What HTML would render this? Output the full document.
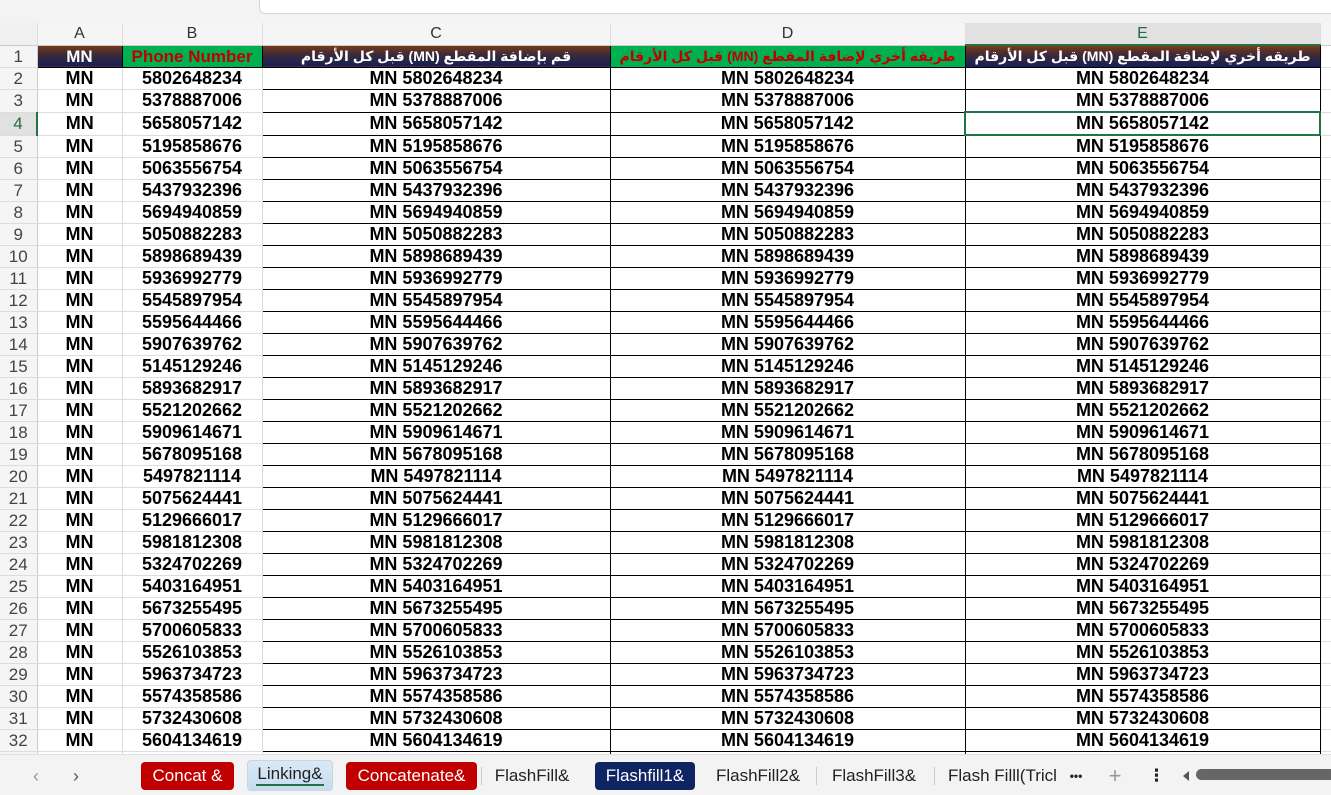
<!DOCTYPE html>
<html><head><meta charset="utf-8"><style>
*{margin:0;padding:0;box-sizing:border-box}
body{width:1331px;height:795px;overflow:hidden;background:#fff;font-family:"Liberation Sans","DejaVu Sans",sans-serif;position:relative}
.top{position:absolute;left:0;top:0;width:1331px;height:24px;background:#f3f3f3}
.fbox{position:absolute;left:259px;top:-2px;width:1080px;height:16px;background:#fff;border:1px solid #d4d4d4;border-radius:0 0 0 6px}
.grid{position:absolute;left:0;top:23px;width:1331px;height:732px;overflow:hidden}
table{border-collapse:collapse;table-layout:fixed}
td{height:22px;padding:0;text-align:center;font-weight:bold;font-size:18px;color:#000;white-space:nowrap;overflow:hidden;line-height:21px}
tr.ch td{height:22px;background:#f5f5f5;font-weight:normal;font-size:16px;color:#333;border-right:1px solid #ddd;border-bottom:1px solid #ccc}
td.rn{background:#f5f5f5;font-weight:normal;font-size:17px;color:#444;border-bottom:1px solid #ddd;border-right:1px solid #ccc;text-align:center}
td.a,td.b{border-right:1px solid #ddd;border-bottom:1px solid #ddd}
td.c,td.d,td.e{border:1px solid #000}
td.x{border-bottom:1px solid #ddd}
tr.h td.g{background:linear-gradient(#7a3a17,#3a2a3a 45%,#14205a);color:#fff;font-size:14px;border:1px solid #000}
tr.h td.a.g{font-size:17px}
tr.h td.gr{background:#00b050;color:#c00000;font-size:14px;border:1px solid #000}
tr.h td.b.gr{font-size:17px}
.tabs{position:absolute;left:0;top:754px;width:1331px;height:41px;background:#f3f3f3;border-top:1px solid #e0e0e0;font-size:17px}
.t{position:absolute;top:7px;height:28px;line-height:28px;text-align:center;color:#222}
.red{background:#c00000;color:#fff;border-radius:4px}
.navy{background:#0e2463;color:#fff;border-radius:4px}
.sep{position:absolute;top:12px;width:1px;height:18px;background:#ccc}
</style></head><body>
<div class="top"><div class="fbox"></div></div>
<div class="grid">
<table>
<colgroup><col style="width:37px"><col style="width:85px"><col style="width:140px"><col style="width:348px"><col style="width:355px"><col style="width:355px"><col style="width:11px"></colgroup>
<tr class="ch"><td style="background:#f0f0f0"></td><td>A</td><td>B</td><td>C</td><td>D</td><td style="background:#e1e1e1;color:#1e6e3e;border-bottom:2px solid #217346">E</td><td style="border-right:none"></td></tr>
<tr class="h"><td class="rn">1</td><td class="a g">MN</td><td class="b gr">Phone Number</td><td class="c g" dir="rtl">قم بإضافة المقطع (MN) قبل كل الأرقام</td><td class="d gr" dir="rtl">طريقه أخري لإضافة المقطع (MN) قبل كل الأرقام</td><td class="e g" dir="rtl">طريقه أخري لإضافة المقطع (MN) قبل كل الأرقام</td><td class="x"></td></tr>
<tr><td class="rn">2</td><td class="a">MN</td><td class="b">5802648234</td><td class="c">MN 5802648234</td><td class="d">MN 5802648234</td><td class="e">MN 5802648234</td><td class="x"></td></tr>
<tr><td class="rn">3</td><td class="a">MN</td><td class="b">5378887006</td><td class="c">MN 5378887006</td><td class="d">MN 5378887006</td><td class="e">MN 5378887006</td><td class="x"></td></tr>
<tr><td class="rn" style="background:#e1e1e1;color:#1e6e3e;border-right:2px solid #217346">4</td><td class="a">MN</td><td class="b">5658057142</td><td class="c">MN 5658057142</td><td class="d">MN 5658057142</td><td class="e" style="border:2px solid #217346">MN 5658057142</td><td class="x"></td></tr>
<tr><td class="rn">5</td><td class="a">MN</td><td class="b">5195858676</td><td class="c">MN 5195858676</td><td class="d">MN 5195858676</td><td class="e">MN 5195858676</td><td class="x"></td></tr>
<tr><td class="rn">6</td><td class="a">MN</td><td class="b">5063556754</td><td class="c">MN 5063556754</td><td class="d">MN 5063556754</td><td class="e">MN 5063556754</td><td class="x"></td></tr>
<tr><td class="rn">7</td><td class="a">MN</td><td class="b">5437932396</td><td class="c">MN 5437932396</td><td class="d">MN 5437932396</td><td class="e">MN 5437932396</td><td class="x"></td></tr>
<tr><td class="rn">8</td><td class="a">MN</td><td class="b">5694940859</td><td class="c">MN 5694940859</td><td class="d">MN 5694940859</td><td class="e">MN 5694940859</td><td class="x"></td></tr>
<tr><td class="rn">9</td><td class="a">MN</td><td class="b">5050882283</td><td class="c">MN 5050882283</td><td class="d">MN 5050882283</td><td class="e">MN 5050882283</td><td class="x"></td></tr>
<tr><td class="rn">10</td><td class="a">MN</td><td class="b">5898689439</td><td class="c">MN 5898689439</td><td class="d">MN 5898689439</td><td class="e">MN 5898689439</td><td class="x"></td></tr>
<tr><td class="rn">11</td><td class="a">MN</td><td class="b">5936992779</td><td class="c">MN 5936992779</td><td class="d">MN 5936992779</td><td class="e">MN 5936992779</td><td class="x"></td></tr>
<tr><td class="rn">12</td><td class="a">MN</td><td class="b">5545897954</td><td class="c">MN 5545897954</td><td class="d">MN 5545897954</td><td class="e">MN 5545897954</td><td class="x"></td></tr>
<tr><td class="rn">13</td><td class="a">MN</td><td class="b">5595644466</td><td class="c">MN 5595644466</td><td class="d">MN 5595644466</td><td class="e">MN 5595644466</td><td class="x"></td></tr>
<tr><td class="rn">14</td><td class="a">MN</td><td class="b">5907639762</td><td class="c">MN 5907639762</td><td class="d">MN 5907639762</td><td class="e">MN 5907639762</td><td class="x"></td></tr>
<tr><td class="rn">15</td><td class="a">MN</td><td class="b">5145129246</td><td class="c">MN 5145129246</td><td class="d">MN 5145129246</td><td class="e">MN 5145129246</td><td class="x"></td></tr>
<tr><td class="rn">16</td><td class="a">MN</td><td class="b">5893682917</td><td class="c">MN 5893682917</td><td class="d">MN 5893682917</td><td class="e">MN 5893682917</td><td class="x"></td></tr>
<tr><td class="rn">17</td><td class="a">MN</td><td class="b">5521202662</td><td class="c">MN 5521202662</td><td class="d">MN 5521202662</td><td class="e">MN 5521202662</td><td class="x"></td></tr>
<tr><td class="rn">18</td><td class="a">MN</td><td class="b">5909614671</td><td class="c">MN 5909614671</td><td class="d">MN 5909614671</td><td class="e">MN 5909614671</td><td class="x"></td></tr>
<tr><td class="rn">19</td><td class="a">MN</td><td class="b">5678095168</td><td class="c">MN 5678095168</td><td class="d">MN 5678095168</td><td class="e">MN 5678095168</td><td class="x"></td></tr>
<tr><td class="rn">20</td><td class="a">MN</td><td class="b">5497821114</td><td class="c">MN 5497821114</td><td class="d">MN 5497821114</td><td class="e">MN 5497821114</td><td class="x"></td></tr>
<tr><td class="rn">21</td><td class="a">MN</td><td class="b">5075624441</td><td class="c">MN 5075624441</td><td class="d">MN 5075624441</td><td class="e">MN 5075624441</td><td class="x"></td></tr>
<tr><td class="rn">22</td><td class="a">MN</td><td class="b">5129666017</td><td class="c">MN 5129666017</td><td class="d">MN 5129666017</td><td class="e">MN 5129666017</td><td class="x"></td></tr>
<tr><td class="rn">23</td><td class="a">MN</td><td class="b">5981812308</td><td class="c">MN 5981812308</td><td class="d">MN 5981812308</td><td class="e">MN 5981812308</td><td class="x"></td></tr>
<tr><td class="rn">24</td><td class="a">MN</td><td class="b">5324702269</td><td class="c">MN 5324702269</td><td class="d">MN 5324702269</td><td class="e">MN 5324702269</td><td class="x"></td></tr>
<tr><td class="rn">25</td><td class="a">MN</td><td class="b">5403164951</td><td class="c">MN 5403164951</td><td class="d">MN 5403164951</td><td class="e">MN 5403164951</td><td class="x"></td></tr>
<tr><td class="rn">26</td><td class="a">MN</td><td class="b">5673255495</td><td class="c">MN 5673255495</td><td class="d">MN 5673255495</td><td class="e">MN 5673255495</td><td class="x"></td></tr>
<tr><td class="rn">27</td><td class="a">MN</td><td class="b">5700605833</td><td class="c">MN 5700605833</td><td class="d">MN 5700605833</td><td class="e">MN 5700605833</td><td class="x"></td></tr>
<tr><td class="rn">28</td><td class="a">MN</td><td class="b">5526103853</td><td class="c">MN 5526103853</td><td class="d">MN 5526103853</td><td class="e">MN 5526103853</td><td class="x"></td></tr>
<tr><td class="rn">29</td><td class="a">MN</td><td class="b">5963734723</td><td class="c">MN 5963734723</td><td class="d">MN 5963734723</td><td class="e">MN 5963734723</td><td class="x"></td></tr>
<tr><td class="rn">30</td><td class="a">MN</td><td class="b">5574358586</td><td class="c">MN 5574358586</td><td class="d">MN 5574358586</td><td class="e">MN 5574358586</td><td class="x"></td></tr>
<tr><td class="rn">31</td><td class="a">MN</td><td class="b">5732430608</td><td class="c">MN 5732430608</td><td class="d">MN 5732430608</td><td class="e">MN 5732430608</td><td class="x"></td></tr>
<tr><td class="rn">32</td><td class="a">MN</td><td class="b">5604134619</td><td class="c">MN 5604134619</td><td class="d">MN 5604134619</td><td class="e">MN 5604134619</td><td class="x"></td></tr>
<tr><td class="rn">33</td><td class="a">MN</td><td class="b">5944423330</td><td class="c">MN 5944423330</td><td class="d">MN 5944423330</td><td class="e">MN 5944423330</td><td class="x"></td></tr>
</table>
</div>
<div class="tabs">
<div class="t" style="left:28px;width:16px;color:#999;font-size:18px">&#8249;</div>
<div class="t" style="left:68px;width:16px;color:#555;font-size:18px">&#8250;</div>
<div class="t red" style="left:141px;width:93px">Concat &amp;</div>
<div class="t" style="left:247px;width:86px;top:5px;height:31px;background:linear-gradient(#dbe9f6,#c6dcf0);border-radius:4px;border:1px solid #c8d6e4;line-height:26px">Linking&amp;<div style="position:absolute;left:8px;right:8px;bottom:4px;height:2px;background:#217346"></div></div>
<div class="t red" style="left:346px;width:131px">Concatenate&amp;</div>
<div class="sep" style="left:481px"></div>
<div class="t" style="left:488px;width:88px">FlashFill&amp;</div>
<div class="t navy" style="left:595px;width:100px">Flashfill1&amp;</div>
<div class="t" style="left:712px;width:92px">FlashFill2&amp;</div>
<div class="sep" style="left:816px"></div>
<div class="t" style="left:828px;width:92px">FlashFill3&amp;</div>
<div class="sep" style="left:934px"></div>
<div class="t" style="left:948px;width:112px;text-align:left;overflow:hidden">Flash Filll(Tricl</div>
<div class="t" style="left:1066px;width:20px;font-size:12px;font-weight:bold">&#8226;&#8226;&#8226;</div>
<div class="t" style="left:1104px;width:22px;color:#999;font-size:22px">+</div>
<div class="t" style="left:1148px;width:14px;font-weight:bold">&#8942;</div>
<div style="position:absolute;left:1183px;top:16px;width:0;height:0;border-top:5px solid transparent;border-bottom:5px solid transparent;border-right:6px solid #555"></div>
<div style="position:absolute;left:1196px;top:14px;width:140px;height:11px;background:#666;border-radius:6px"></div>
</div>
</body></html>
